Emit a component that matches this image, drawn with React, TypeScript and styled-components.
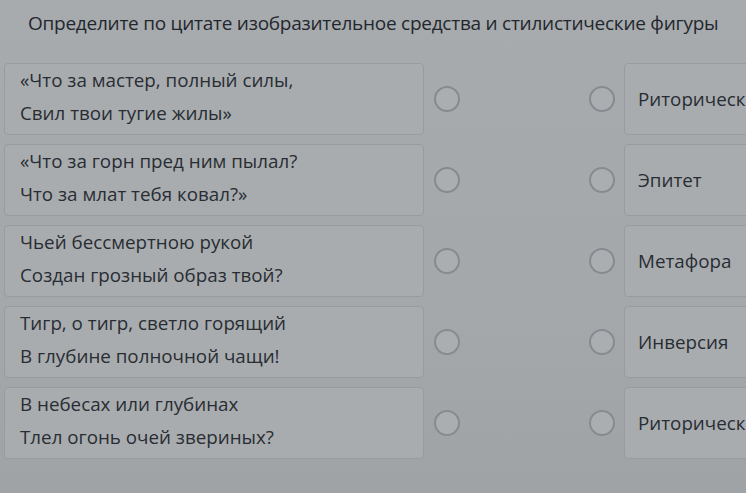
import React from 'react'
import styled, { createGlobalStyle } from 'styled-components'

const GlobalStyle = createGlobalStyle`
  html, body {
    margin: 0;
    padding: 0;
    background: #a5a9ac;
    overflow: hidden;
  }
  body {
    font-family: "Open Sans", "Noto Sans", sans-serif;
    color: #2b2f35;
  }
`

const Page = styled.div`
  width: 746px;
  height: 493px;
  overflow: hidden;
  background: linear-gradient(180deg, #a7abae 0%, #a4a8ab 60%, #9fa3a6 100%);
`

const Title = styled.h1`
  margin: 0;
  padding: 11px 0 0 28px;
  font-size: 19px;
  font-weight: 400;
  line-height: 25px;
  letter-spacing: -0.25px;
  white-space: nowrap;
  color: #23272d;
`

const List = styled.div`
  display: flex;
  flex-direction: column;
  gap: 9px;
  padding: 27px 0 0 4px;
`

const Row = styled.div`
  display: flex;
  align-items: center;
`

const Quote = styled.div`
  flex: none;
  box-sizing: border-box;
  width: 420px;
  height: 72px;
  padding: 0 15px;
  border: 1px solid #989ca0;
  border-radius: 4px;
  background: #a8acaf;
  font-size: 18.8px;
  line-height: 33px;
  color: #292d33;
  white-space: nowrap;
`

const Radio = styled.span<{ $offset: number }>`
  flex: none;
  box-sizing: border-box;
  width: 26px;
  height: 26px;
  margin-left: ${({ $offset }) => $offset}px;
  border: 2px solid #858b90;
  border-radius: 50%;
  background: #aaaeb1;
`

const Answer = styled.div`
  flex: none;
  box-sizing: border-box;
  width: 300px;
  height: 72px;
  margin-left: 9px;
  padding: 0 13px;
  display: flex;
  align-items: center;
  border: 1px solid #989ca0;
  border-radius: 4px;
  background: #a8acaf;
  font-size: 18.8px;
  color: #292d33;
  white-space: nowrap;
`

const pairs: [string, string, string][] = [
  ['«Что за мастер, полный силы,', 'Свил твои тугие жилы»', 'Риторический вопрос'],
  ['«Что за горн пред ним пылал?', 'Что за млат тебя ковал?»', 'Эпитет'],
  ['Чьей бессмертною рукой', 'Создан грозный образ твой?', 'Метафора'],
  ['Тигр, о тигр, светло горящий', 'В глубине полночной чащи!', 'Инверсия'],
  ['В небесах или глубинах', 'Тлел огонь очей звериных?', 'Риторическое обращение'],
]

function App() {
  return (
    <Page>
      <GlobalStyle />
      <Title>Определите по цитате изобразительное средства и стилистические фигуры</Title>
      <List>
        {pairs.map(([a, b, answer], i) => (
          <Row key={i}>
            <Quote>
              {a}
              <br />
              {b}
            </Quote>
            <Radio $offset={10} />
            <Radio $offset={129} />
            <Answer>{answer}</Answer>
          </Row>
        ))}
      </List>
    </Page>
  )
}

export default App
